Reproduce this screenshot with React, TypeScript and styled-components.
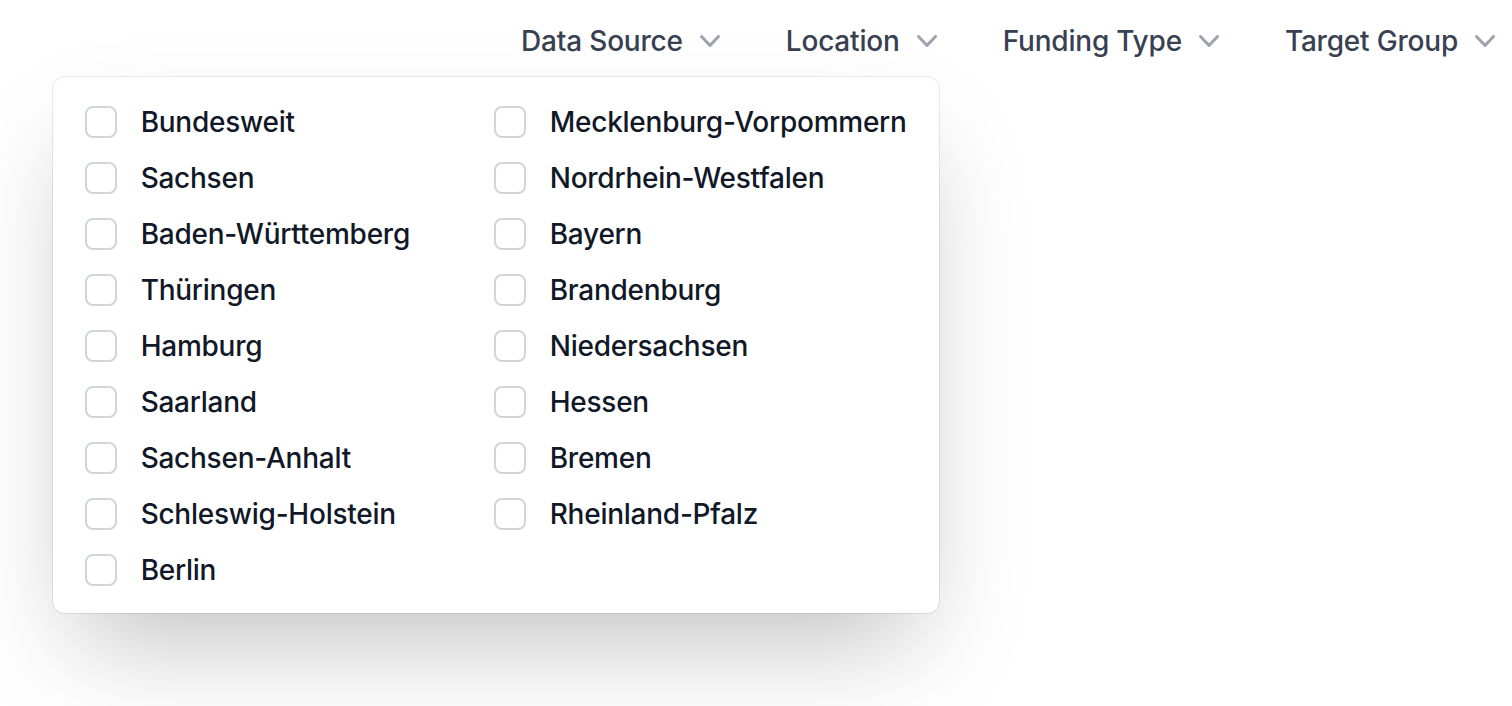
import React from "react";
import styled, { createGlobalStyle } from "styled-components";

const GlobalStyle = createGlobalStyle`
  html, body {
    margin: 0;
    padding: 0;
    background: #ffffff;
    font-family: Inter, "Noto Sans", "Liberation Sans", sans-serif;
    -webkit-font-smoothing: antialiased;
  }
  * { box-sizing: border-box; }
`;

const Page = styled.div`
  width: 1512px;
  height: 706px;
  overflow: hidden;
  background: #ffffff;
`;

const FilterBar = styled.div`
  display: flex;
  justify-content: flex-end;
  align-items: center;
  gap: 64px;
  padding: 21px 15px 0 0;
`;

const FilterGroup = styled.div`
  position: relative;
`;

const FilterButton = styled.button`
  display: inline-flex;
  align-items: center;
  height: 40px;
  padding: 0;
  border: none;
  background: transparent;
  font-family: inherit;
  font-size: 28px;
  line-height: 40px;
  font-weight: 500;
  letter-spacing: -0.2px;
  color: #374151;
  cursor: pointer;
`;

const Chevron = styled.svg`
  width: 40px;
  height: 40px;
  margin-left: 7px;
  margin-right: -8px;
  flex-shrink: 0;
  fill: #9ca3af;
`;

const Panel = styled.div`
  position: absolute;
  top: 56px;
  right: 0;
  width: 886px;
  padding: 25px 32px 23px;
  background: #ffffff;
  border-radius: 12px;
  box-shadow: 0 0 0 1px rgba(0, 0, 0, 0.08),
    0 50px 100px -24px rgba(0, 0, 0, 0.25);
  z-index: 10;
`;

const OptionGrid = styled.div`
  display: grid;
  grid-template-columns: 1fr 1fr;
  grid-template-rows: repeat(9, 40px);
  row-gap: 16px;
`;

const Option = styled.label<{ $col: number; $row: number }>`
  display: flex;
  align-items: center;
  height: 40px;
  gap: 24px;
  grid-column: ${(p) => p.$col};
  grid-row: ${(p) => p.$row};
  cursor: pointer;
`;

const Box = styled.span`
  width: 32px;
  height: 32px;
  flex-shrink: 0;
  border: 2px solid #d1d5db;
  border-radius: 8px;
  background: #ffffff;
`;

const OptionText = styled.span`
  font-size: 28px;
  line-height: 40px;
  font-weight: 500;
  letter-spacing: -0.25px;
  color: #111827;
  white-space: nowrap;
`;

const ChevronDown = () => (
  <Chevron viewBox="0 0 20 20" aria-hidden="true">
    <path
      fillRule="evenodd"
      d="M5.23 7.21a.75.75 0 011.06.02L10 11.168l3.71-3.938a.75.75 0 111.08 1.04l-4.25 4.5a.75.75 0 01-1.08 0l-4.25-4.5a.75.75 0 01.02-1.06z"
      clipRule="evenodd"
    />
  </Chevron>
);

const columns: string[][] = [
  [
    "Bundesweit",
    "Sachsen",
    "Baden-Württemberg",
    "Thüringen",
    "Hamburg",
    "Saarland",
    "Sachsen-Anhalt",
    "Schleswig-Holstein",
    "Berlin",
  ],
  [
    "Mecklenburg-Vorpommern",
    "Nordrhein-Westfalen",
    "Bayern",
    "Brandenburg",
    "Niedersachsen",
    "Hessen",
    "Bremen",
    "Rheinland-Pfalz",
  ],
];

const Filter: React.FC<{ label: string; children?: React.ReactNode }> = ({
  label,
  children,
}) => (
  <FilterGroup>
    <FilterButton type="button">
      {label}
      <ChevronDown />
    </FilterButton>
    {children}
  </FilterGroup>
);

export default function App() {
  return (
    <Page>
      <GlobalStyle />
      <FilterBar>
        <Filter label="Data Source" />
        <Filter label="Location">
          <Panel>
            <OptionGrid>
              {columns.map((col, c) =>
                col.map((s, r) => (
                  <Option key={s} $col={c + 1} $row={r + 1}>
                    <Box />
                    <OptionText>{s}</OptionText>
                  </Option>
                ))
              )}
            </OptionGrid>
          </Panel>
        </Filter>
        <Filter label="Funding Type" />
        <Filter label="Target Group" />
      </FilterBar>
    </Page>
  );
}
